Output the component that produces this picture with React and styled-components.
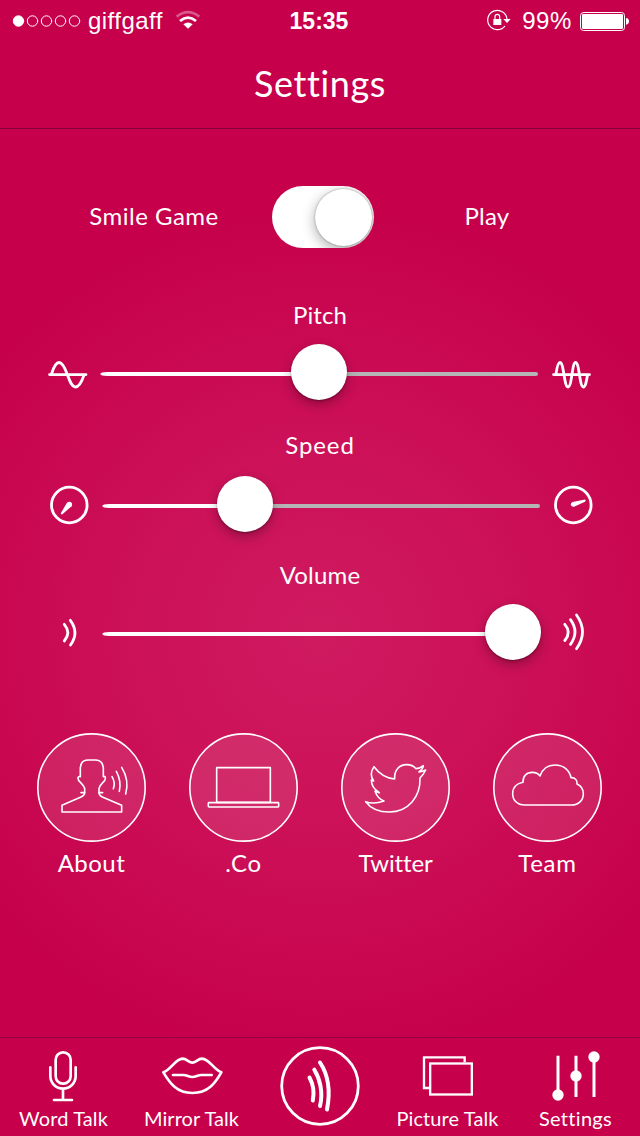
import React from "react";
import styled, { createGlobalStyle } from "styled-components";

const Global = createGlobalStyle`
  * { box-sizing: border-box; }
  html, body { margin: 0; padding: 0; background: #c6004b; }
  svg { display: block; flex: none; overflow: visible; }
`;

const Screen = styled.div`
  width: 640px;
  height: 1136px;
  display: flex;
  flex-direction: column;
  overflow: hidden;
  color: #fff;
  font-family: Lato, "Open Sans", sans-serif;
  background: #c6004b;
`;

const Header = styled.header`
  height: 129px;
  flex: none;
  border-bottom: 1px solid #84043a;
`;

const StatusBar = styled.div`
  height: 40px;
  display: grid;
  grid-template-columns: 1fr auto 1fr;
  align-items: center;
  padding: 1px 11px 0 13px;
  font-family: "Liberation Sans", Arial, sans-serif;
  font-size: 24px;
  line-height: 40px;
`;

const StatusGroup = styled.div`
  display: flex;
  align-items: center;
  justify-content: ${(p) => (p.$end ? "flex-end" : "flex-start")};
`;

const Carrier = styled.span`
  margin: 0 13px 0 7px;
  letter-spacing: 0.45px;
`;

const Clock = styled.span`
  font-size: 23px;
  font-weight: 700;
  margin-right: 4px;
`;

const Percent = styled.span`
  margin: 0 8px 0 11px;
  letter-spacing: 0.6px;
`;

const Title = styled.h1`
  margin: 0;
  height: 88px;
  line-height: 86px;
  text-align: center;
  font-size: 36px;
  font-weight: 400;
  letter-spacing: 0.6px;
`;

const Main = styled.main`
  flex: 1;
  padding-top: 57px;
  background: radial-gradient(circle 430px at 320px 505px, #cf1a60 0%, #cc1158 45%, #c6004b 100%);
`;

const ToggleRow = styled.div`
  display: grid;
  grid-template-columns: 235px 102px 227px;
  margin-left: 37px;
  align-items: center;
`;

const Label = styled.div`
  font-size: 24px;
  line-height: 30px;
  text-align: center;
  letter-spacing: ${(p) => p.$track}px;
`;

const ToggleLabel = styled(Label)`
  padding: 0 1px 3px 0;
`;

const Switch = styled.div`
  width: 102px;
  height: 62px;
  border-radius: 31px;
  background: #fff;
  display: flex;
  justify-content: flex-end;
  padding: 3px 2px;
  overflow: hidden;
`;

const SwitchKnob = styled.div`
  width: 57px;
  height: 57px;
  border-radius: 50%;
  background: #fff;
  box-shadow: 0 0 2px rgba(0, 0, 0, 0.4), 0 4px 14px rgba(0, 0, 0, 0.33);
`;

const Control = styled.section`
  height: 130px;
`;

const Controls = styled.div`
  padding-top: 52px;
`;

const SliderRow = styled.div`
  display: flex;
  align-items: center;
  height: 60px;
  margin-top: ${(p) => p.$gap}px;
  padding-left: 48px;
`;

const Track = styled.div`
  display: flex;
  align-items: center;
  width: 438px;
  height: 56px;
  margin: 0 13px;
`;

const Filled = styled.div`
  width: ${(p) => p.$w}px;
  height: 4px;
  margin-top: 4px;
  background: #fff;
  clip-path: polygon(0 50%, 2px 15%, 7px 0, 100% 0, 100% 100%, 7px 100%, 2px 85%);
`;

const Rest = styled.div`
  flex: 1;
  height: 4px;
  margin: 4px 0 0 -2px;
  border-radius: 0 2px 2px 0;
  background: #b5b5b5;
`;

const Knob = styled.div`
  width: 56px;
  height: 56px;
  flex: none;
  margin-left: -2px;
  border-radius: 50%;
  background: #fff;
  z-index: 1;
  box-shadow: 0 1px 2px rgba(0, 0, 0, 0.35), 0 5px 12px rgba(0, 0, 0, 0.28);
`;

const Links = styled.nav`
  display: flex;
  gap: 43px;
  padding: 43px 0 0 37px;
`;

const LinkItem = styled.div`
  width: 109px;
  display: flex;
  flex-direction: column;
  gap: 6px;
`;

const TabBar = styled.footer`
  height: 99px;
  flex: none;
  display: grid;
  grid-template-columns: repeat(5, 128px);
  border-top: 1px solid #94033f;
`;

const Tab = styled.div`
  display: flex;
  flex-direction: column;
  align-items: center;
  padding-top: 8px;
`;

const TabLabel = styled.div`
  font-size: 20px;
  line-height: 24px;
  white-space: nowrap;
  letter-spacing: ${(p) => p.$track}px;
  margin: 0 1px 0 0;
`;

const Art = ({ w, h, box, sw = 3, children }) => (
  <svg width={w} height={h} viewBox={box} fill="none" stroke="#fff" strokeWidth={sw} strokeLinecap="round" strokeLinejoin="round">
    {children}
  </svg>
);

const SignalDots = () => (
  <Art w={68} h={12} box="0 0 68 12" sw={1}>
    <circle cx="5.5" cy="6" r="5.2" fill="#fff" />
    {[19.5, 33.5, 47.5, 61.5].map((x) => <circle key={x} cx={x} cy="6" r="5.2" />)}
  </Art>
);

const Wifi = () => (
  <Art w={24} h={20} box="530 34 72 60" sw={8}>
    <g strokeLinecap="butt">
      <path d="M532 51Q566 24 600 51" opacity=".35" />
      <path d="M542 64Q566 44 590 64" />
    </g>
    <path d="M552 74Q566 63 580 74L566 87Z" fill="#fff" stroke="none" />
  </Art>
);

const RotationLock = () => (
  <Art w={24} h={22} box="500 30 72 66" sw={3.5}>
    <path d="M560 58A29 29 0 1 0 553 79" />
    <path d="M549 57H571L560 69Z" fill="#fff" stroke="none" />
    <rect x="519" y="57" width="24" height="18" fill="#fff" stroke="none" />
    <path d="M524 57V50a7 7 0 0 1 14 0V57" />
  </Art>
);

const Battery = () => (
  <Art w={49} h={19} box="780 33 147 57" sw={3}>
    <rect x="781.5" y="34.5" width="132" height="54" rx="9" />
    <rect x="786" y="39" width="123" height="45" rx="4" fill="#fff" stroke="none" />
    <path d="M918 51Q927 52 927 61T918 71Z" fill="#fff" stroke="none" />
  </Art>
);

const WaveLow = () => (
  <Art w={39} h={30} box="48 357 39 30" sw={2.8}>
    <path d="M49.5 374.6H86M51.5 374C54 366 56 362.5 59 362.5C62.5 362.5 65 368 67.3 374.5C70 382 72 387 75.5 387C79 387 82 381 84 375" />
  </Art>
);
const WaveHigh = () => (
  <Art w={39} h={30} box="551 357 39 30" sw={2.8}>
    <path d="M553.5 374.6H589.5M556 374C557 367 558 362.5 560 362.5C564 362.5 564 387 568 387C572 387 572 362.5 575.5 362.5C579.5 362.5 579.5 387 583.3 387C585.5 387 586.5 381 587.5 375" />
  </Art>
);
const GaugeLow = () => (
  <Art w={41} h={40} box="48 484 41 40" sw={2.8}>
    <circle cx="69.3" cy="505" r="17.8" />
    <path d="M66.8 503L60.8 513.3Q60.8 514.9 62.4 514.3L71.600 506.200Q73 503.5 70.600 502Q68.400 501.300 66.800 503Z" fill="#fff" stroke="none" />
  </Art>
);
const GaugeHigh = () => (
  <Art w={41} h={40} box="553 484 41 40" sw={2.8}>
    <circle cx="573.3" cy="505" r="17.8" />
    <path d="M572.600 502L585 499.600Q586.500 500.500 585 501.700L574 506.700Q571.300 507.100 570.800 504.500Q570.800 502.500 572.600 502Z" fill="#fff" stroke="none" />
  </Art>
);
const VolumeLow = () => (
  <Art w={41} h={40} box="48 612 41 40" sw={2.8}>
    <path d="M64.300 624.300Q71.300 632.500 64.300 641M70.300 620.300Q79.500 632.500 70.500 645" />
  </Art>
);
const VolumeHigh = () => (
  <Art w={41} h={40} box="553 612 41 40" sw={2.8}>
    <path d="M564.800 624.300Q571.800 632.300 564.800 640.500M570.500 619.700Q579.500 632 570.500 644.300M576.500 615Q588.500 632 576.500 648.700" />
  </Art>
);

const Disc = ({ x, children }) => (
  <Art w={109} h={109} box={`${x} 39 327 327`} sw={4.8}>
    <circle cx={x + 163.5} cy="202.5" r="161" fill="rgba(255,255,255,.1)" />
    {children}
  </Art>
);

const links = [
  ["About", 51, 0.5, (
    <>
      <path d="M183 218H194Q194 226 183 231L126 256V276H305V256L247 231Q237 226 237 218H248" />
      <path d="M194 218V205Q192 198 182 188Q173 180 174 173Q176 168 181 170V143Q182 120 205 120H225Q248 120 250 143V170Q255 168 256 173Q257 180 249 187Q239 197 237 205V218" />
      <path d="M276 170Q287 188 280 206M289 154Q305 183 298 214M305 142Q329 181 317 222" />
    </>
  )],
  [".Co", 27, 0.6, (
    <>
      <rect x="110" y="143" width="161" height="104" />
      <rect x="85" y="248" width="211" height="13" rx="2" />
    </>
  )],
  ["Twitter", 33, -0.15, (
    <path d="M132 140C145 158 168 174 194 177C192 150 208 134 230 134C243 134 252 139 258 146C266 146 274 142 280 137C279 144 274 151 267 156C275 155 281 153 287 150C283 158 277 167 270 174C272 230 235 276 178 276C150 276 124 268 107 245C125 252 145 249 162 243C150 240 142 232 135 214L148 218C135 210 124 200 124 180L131 183C121 170 122 155 132 140Z" />
  )],
  ["Team", 39, 0.7, (
    <path d="M134 255C112 255 98 240 98 221C98 203 110 190 129 187C128 168 140 157 157 157C167 157 175 161 180 168C187 148 203 135 225 135C250 135 268 150 273 173C284 172 293 180 291 192C302 197 310 206 310 221C310 241 295 255 275 255Z" />
  )],
];

const Slider = ({ label, track, gap, filled, low, high }) => (
  <Control>
    <Label $track={track}>{label}</Label>
    <SliderRow $gap={gap}>
      {low}
      <Track>
        <Filled $w={filled} />
        <Knob />
        <Rest />
      </Track>
      {high}
    </SliderRow>
  </Control>
);

export default function App() {
  return (
    <Screen>
      <Global />
      <Header>
        <StatusBar>
          <StatusGroup>
            <SignalDots />
            <Carrier>giffgaff</Carrier>
            <Wifi />
          </StatusGroup>
          <Clock>15:35</Clock>
          <StatusGroup $end>
            <RotationLock />
            <Percent>99%</Percent>
            <Battery />
          </StatusGroup>
        </StatusBar>
        <Title>Settings</Title>
      </Header>
      <Main>
        <ToggleRow>
          <ToggleLabel $track={0.5}>Smile Game</ToggleLabel>
          <Switch><SwitchKnob /></Switch>
          <ToggleLabel $track={0.2}>Play</ToggleLabel>
        </ToggleRow>
        <Controls>
          <Slider label="Pitch" track={0.1} gap={12} filled={193} low={<WaveLow />} high={<WaveHigh />} />
          <Slider label="Speed" track={0.9} gap={14} filled={117} low={<GaugeLow />} high={<GaugeHigh />} />
          <Slider label="Volume" track={0.2} gap={12} filled={385} low={<VolumeLow />} high={<VolumeHigh />} />
        </Controls>
        <Links>
          {links.map(([name, x, track, art]) => (
            <LinkItem key={name}>
              <Disc x={x}>{art}</Disc>
              <Label $track={track}>{name}</Label>
            </LinkItem>
          ))}
        </Links>
      </Main>
      <TabBar>
        <Tab>
          <Art w={64} h={60} box="96 48 192 180" sw={8}>
            <rect x="167" y="67" width="45" height="94" rx="22" />
            <path d="M151 112V138a38 38 0 0 0 76 0V112M189 177V208M162 210H216" />
          </Art>
          <TabLabel $track={0.1}>Word Talk</TabLabel>
        </Tab>
        <Tab>
          <Art w={64} h={60} box="480 48 192 180" sw={8}>
            <path d="M490 127C515 118 525 87 548 86C560 86 567 98 577 98C587 98 594 86 606 86C630 88 640 118 664 127C645 160 625 189 577 189C530 189 510 160 490 127Z" />
            <path d="M519 135H550C560 135 567 141 577 141C587 141 594 135 604 135H635" />
          </Art>
          <TabLabel $track={0.05}>Mirror Talk</TabLabel>
        </Tab>
        <Tab>
          <Art w={80} h={80} box="280 1046 80 80" sw={2.8}>
            <circle cx="320" cy="1086" r="38.3" />
            <path strokeWidth="4" d="M309.5 1077.500C312.500 1083 314.800 1091 312.800 1100.500M314.300 1069.700C319.500 1078 323.500 1092 320 1106M320 1062.500C327 1073 331 1089 327 1109.500" />
          </Art>
        </Tab>
        <Tab>
          <Art w={64} h={60} box="288 48 192 180" sw={7}>
            <g strokeLinejoin="miter" strokeLinecap="butt">
              <path d="M327 174H312V82H434V97" />
              <rect x="330.5" y="100.5" width="125" height="93" />
            </g>
          </Art>
          <TabLabel $track={0.1}>Picture Talk</TabLabel>
        </Tab>
        <Tab>
          <Art w={64} h={60} box="672 48 192 180" sw={9}>
            <path strokeLinecap="butt" d="M714 77V195M768 77V201M822 81V201" />
            <g fill="#fff" stroke="none">
              <circle cx="714" cy="195" r="17" />
              <circle cx="768" cy="138" r="17" />
              <circle cx="822" cy="81" r="17" />
            </g>
          </Art>
          <TabLabel $track={0.3}>Settings</TabLabel>
        </Tab>
      </TabBar>
    </Screen>
  );
}
